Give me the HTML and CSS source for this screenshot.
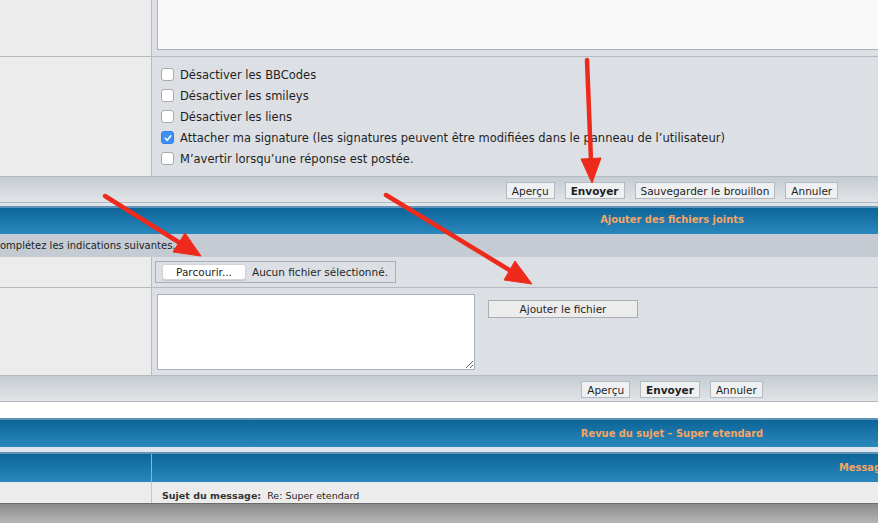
FILE: index.html
```html
<!DOCTYPE html>
<html>

<head>
    <meta charset="utf-8">
    <link rel="stylesheet" href="styles.css">
</head>

<body>
    <div class="page">
        <div class="row row-msg">
            <div class="cell-left"></div>
            <div class="cell-right">
                <div class="msgbox"></div>
            </div>
        </div>

        <div class="row row-opts">
            <div class="cell-left"></div>
            <div class="cell-right">
                <div class="opt"><span class="cb"></span>Désactiver les BBCodes</div>
                <div class="opt"><span class="cb"></span>Désactiver les smileys</div>
                <div class="opt"><span class="cb"></span>Désactiver les liens</div>
                <div class="opt">
                    <span class="cb checked">
                        <svg width="10" height="10" viewBox="0 0 10 10"><path d="M2.2 5.3 L4.2 7.3 L7.9 2.8" fill="none" stroke="#fff" stroke-width="1.6" stroke-linecap="round" stroke-linejoin="round"/></svg>
                    </span>Attacher ma signature (les signatures peuvent être modifiées dans le panneau de l’utilisateur)
                </div>
                <div class="opt"><span class="cb"></span>M’avertir lorsqu’une réponse est postée.</div>
            </div>
        </div>

        <div class="bar bar-main">
            <button class="btn">Aperçu</button>
            <button class="btn btn-bold">Envoyer</button>
            <button class="btn">Sauvegarder le brouillon</button>
            <button class="btn">Annuler</button>
        </div>
        <div class="strip"></div>
        <div class="cat">Ajouter des fichiers joints</div>
        <div class="hint">Complétez les indications suivantes.</div>

        <div class="row row-file">
            <div class="cell-left"></div>
            <div class="cell-right">
                <div class="filebox">
                    <span class="file-btn">Parcourir...</span>
                    <span class="file-name">Aucun fichier sélectionné.</span>
                </div>
            </div>
        </div>

        <div class="row row-comment">
            <div class="cell-left"></div>
            <div class="cell-right">
                <textarea class="comment"></textarea>
                <button class="btn btn-add">Ajouter le fichier</button>
            </div>
        </div>

        <div class="bar bar-main">
            <button class="btn">Aperçu</button>
            <button class="btn btn-bold">Envoyer</button>
            <button class="btn">Annuler</button>
        </div>
        <div class="blank"></div>
        <div class="cat cat-review">Revue du sujet – Super etendard</div>
        <div class="strip strip-review"></div>

        <div class="row row-head">
            <div class="cell-left"></div>
            <div class="cell-right"><span class="head-title">Message</span></div>
        </div>
        <div class="row row-post">
            <div class="cell-left"></div>
            <div class="cell-right">
                <span class="post-label">Sujet du message:</span>&nbsp; Re: Super etendard
            </div>
        </div>
    </div>
    <div class="backdrop"></div>

    <svg class="arrows" width="878" height="523" viewBox="0 0 878 523">
        <g fill="#ee2a1d" stroke="#ee2a1d">
            <line x1="105" y1="196" x2="180" y2="243" stroke-width="4.5" stroke-linecap="round" />
            <polygon points="201,256 173,252 185,233" stroke-width="1" stroke-linejoin="round" />

            <line x1="587" y1="60" x2="591" y2="161" stroke-width="4.5" stroke-linecap="round" />
            <polygon points="592,183 581,159 601,158" stroke-width="1" stroke-linejoin="round" />

            <line x1="386" y1="195" x2="511" y2="271" stroke-width="4.5" stroke-linecap="round" />
            <polygon points="532,284 504,280 515,261" stroke-width="1" stroke-linejoin="round" />
        </g>
    </svg>
</body>

</html>
```

FILE: styles.css
```css
* {
    margin: 0;
    padding: 0;
    box-sizing: border-box;
}

html,
body {
    width: 878px;
    height: 523px;
    overflow: hidden;
}

body {
    font-family: "DejaVu Sans", Verdana, sans-serif;
    font-size: 11px;
    color: #1f1f1f;
    background: #a4a4a4;
    position: relative;
}

/* page wider than the window, centred on x=672 */
.page {
    width: 1344px;
}

.row {
    display: flex;
    border-bottom: 1px solid #b3bac2;
}

.cell-left {
    width: 152px;
    flex-shrink: 0;
    background: #ececec;
    border-right: 1px solid #b3bac2;
}

.cell-right {
    flex: 1;
    background: #dce0e5;
}

/* message textarea, only its bottom visible */
.row-msg {
    height: 57px;
}

.row-msg .cell-right {
    padding-left: 5px;
}

.msgbox {
    height: 50px;
    background: #f8f8f8;
    border: 1px solid #a9b1b9;
    border-top: none;
}

/* options */
.row-opts {
    height: 120px;
}

.row-opts .cell-right {
    padding: 7px 0 0 9px;
}

.opt {
    height: 21px;
    display: flex;
    align-items: center;
    white-space: nowrap;
    font-size: 11.5px;
}

.cb {
    width: 13px;
    height: 13px;
    margin-right: 6px;
    border: 1px solid #a9a9a9;
    border-radius: 3px;
    background: #fff;
    display: flex;
    align-items: center;
    justify-content: center;
}

.cb.checked {
    background: #3d8ff3;
    border-color: #2f7fe0;
}

/* button bars */
.bar {
    height: 26px;
    padding-top: 5px;
    display: flex;
    justify-content: center;
    gap: 10px;
    background: linear-gradient(#c6ccd3, #e1e4e7);
    border-bottom: 1px solid #b2b9c1;
}

.btn {
    height: 17px;
    padding: 0 5px;
    font-family: "DejaVu Sans", Verdana, sans-serif;
    font-size: 10.5px;
    color: #1f1f1f;
    background: #eef0f2;
    border: 1px solid #b5bac0;
    border-radius: 0;
    white-space: nowrap;
}

.btn-bold {
    font-weight: bold;
    padding: 0 5px;
}

.strip {
    height: 3px;
    background: #dfe4e8;
}

.cat {
    height: 28px;
    line-height: 23px;
    text-align: center;
    color: #f5a565;
    font-family: "DejaVu Sans Condensed", "DejaVu Sans", sans-serif;
    font-stretch: condensed;
    font-weight: bold;
    font-size: 11px;
    background: linear-gradient(#0d6598, #2a88bd);
    border-top: 2px solid #5f93b8;
}

.cat-review {
    height: 29px;
    line-height: 28px;
}

.strip-review {
    height: 5px;
    background: #e0e7ec;
}

.hint {
    height: 23px;
    line-height: 23px;
    font-size: 10px;
    background: #c5cbd2;
    text-indent: -7px;
    white-space: nowrap;
}

/* file picker */
.row-file {
    height: 31px;
}

.row-file .cell-right {
    padding: 4px 0 0 3px;
}

.filebox {
    width: 241px;
    height: 22px;
    padding: 0 6px;
    display: flex;
    align-items: center;
    gap: 6px;
    border: 1px solid #a6aeb6;
    white-space: nowrap;
    font-size: 10.5px;
}

.file-btn {
    flex-shrink: 0;
    width: 84px;
    height: 16px;
    line-height: 15px;
    text-align: center;
    background: #fff;
    border: 1px solid #d4d4d4;
    border-radius: 3px;
    box-shadow: 0 1px 1px rgba(0, 0, 0, 0.12);
}

.file-name {
    flex-shrink: 0;
}

/* comment + add button */
.row-comment {
    height: 88px;
}

.row-comment .cell-right {
    padding: 6px 0 0 5px;
    display: flex;
    align-items: flex-start;
    gap: 13px;
}

.comment {
    width: 318px;
    height: 76px;
    background: #fff;
    border: 1px solid #a9b0b8;
    resize: both;
}

.btn-add {
    width: 150px;
    height: 18px;
    margin-top: 6px;
    background: #ececec;
    border-color: #a8adb3;
}

.blank {
    height: 16px;
    background: #fff;
}

/* review table */
.row-head {
    height: 30px;
    border-bottom: none;
    background: linear-gradient(#0d6598, #2a88bd);
    border-top: 2px solid #5f93b8;
}

.row-head .cell-left,
.row-head .cell-right {
    background: transparent;
}

.row-head .cell-left {
    border-right: 1px solid #8db4cf;
}

.head-title {
    display: block;
    padding-left: 687px;
    line-height: 27px;
    color: #f5a565;
    font-family: "DejaVu Sans Condensed", "DejaVu Sans", sans-serif;
    font-stretch: condensed;
    font-weight: bold;
    font-size: 11px;
}

.row-post {
    height: 22px;
    border-bottom: 1px solid #6c6c6c;
}

.row-post .cell-left {
    border-right-color: #c3c8cd;
}

.row-post .cell-right {
    background: #ececec;
    padding: 8px 0 0 10px;
    font-size: 9.5px;
    line-height: 12px;
    white-space: nowrap;
}

.post-label {
    font-weight: bold;
    color: #333;
}

.backdrop {
    height: 20px;
    background: linear-gradient(#8b8b8b, #b8b8b8);
}

/* annotation arrows drawn over the page */
.arrows {
    position: absolute;
    top: 0;
    left: 0;
    pointer-events: none;
}
```
